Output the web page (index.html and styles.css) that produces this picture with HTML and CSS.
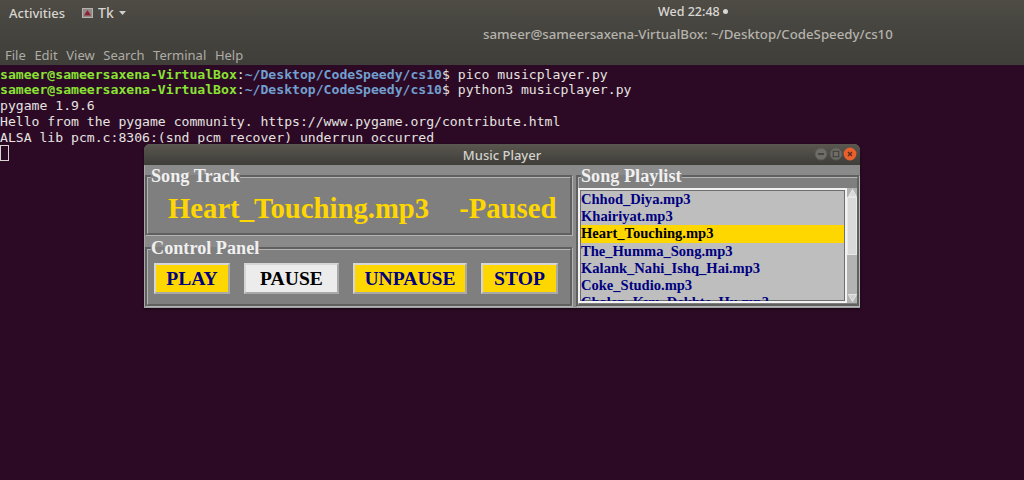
FILE: index.html
```html
<!DOCTYPE html>
<html lang="en">
<head>
<meta charset="utf-8">
<title>Music Player</title>
<link rel="stylesheet" href="styles.css">
</head>
<body>
<div class="desktop">
  <header class="chrome">
    <div class="panel">
      <span class="activities">Activities</span>
      <span class="app">
        <svg class="app-icon" width="11" height="10" viewBox="0 0 11 10"><rect x="0.5" y="0.5" width="10" height="9" fill="#8f8a88" stroke="#b5b2ae"/><path d="M5.5 2 L9 7.5 H2 Z" fill="#8e2230"/></svg>
        <span class="app-name">Tk</span>
        <svg class="caret" width="7" height="4" viewBox="0 0 7 4"><path d="M0 0 H7 L3.5 4 Z" fill="#d0cfca"/></svg>
      </span>
      <span class="clock">Wed 22:48<i class="dot"></i></span>
    </div>
    <div class="term-title">sameer@sameersaxena-VirtualBox: ~/Desktop/CodeSpeedy/cs10</div>
    <nav class="menu">
      <span>File</span><span>Edit</span><span>View</span><span>Search</span><span>Terminal</span><span>Help</span>
    </nav>
  </header>
  <main class="terminal">
    <div class="line"><b class="user">sameer@sameersaxena-VirtualBox</b>:<b class="path">~/Desktop/CodeSpeedy/cs10</b>$ pico musicplayer.py</div>
    <div class="line"><b class="user">sameer@sameersaxena-VirtualBox</b>:<b class="path">~/Desktop/CodeSpeedy/cs10</b>$ python3 musicplayer.py</div>
    <div class="line">pygame 1.9.6</div>
    <div class="line">Hello from the pygame community. https://www.pygame.org/contribute.html</div>
    <div class="line">ALSA lib pcm.c:8306:(snd_pcm_recover) underrun occurred</div>
    <div class="line"><span class="cursor"></span></div>
  </main>

  <section class="player">
    <div class="titlebar">
      <span class="title">Music Player</span>
      <span class="controls">
        <svg width="14" height="14" viewBox="0 0 14 14"><circle cx="7" cy="7" r="6" fill="#6f6d68" stroke="#5b5955"/><path d="M4 7 H10" stroke="#3b3a37" stroke-width="1.4"/></svg>
        <svg width="14" height="14" viewBox="0 0 14 14"><circle cx="7" cy="7" r="6" fill="#6f6d68" stroke="#5b5955"/><rect x="4.2" y="4.2" width="5.6" height="5.6" fill="none" stroke="#3b3a37"/></svg>
        <svg width="14" height="14" viewBox="0 0 14 14"><circle cx="7" cy="7" r="6.4" fill="#e9602c"/><path d="M5 5 L9 9 M9 5 L5 9" stroke="#5a2a18" stroke-width="1.3"/></svg>
      </span>
    </div>
    <div class="player-body">
      <div class="left-col">
        <fieldset class="frame track-frame">
          <legend>Song Track</legend>
          <div class="track"><span>Heart_Touching.mp3</span><span>-Paused</span></div>
        </fieldset>
        <fieldset class="frame panel-frame">
          <legend>Control Panel</legend>
          <div class="buttons">
            <button class="btn play">PLAY</button>
            <button class="btn pause">PAUSE</button>
            <button class="btn unpause">UNPAUSE</button>
            <button class="btn stop">STOP</button>
          </div>
        </fieldset>
      </div>
      <fieldset class="frame list-frame">
        <legend>Song Playlist</legend>
        <div class="list-wrap">
          <ul class="list">
            <li>Chhod_Diya.mp3</li>
            <li>Khairiyat.mp3</li>
            <li class="selected">Heart_Touching.mp3</li>
            <li>The_Humma_Song.mp3</li>
            <li>Kalank_Nahi_Ishq_Hai.mp3</li>
            <li>Coke_Studio.mp3</li>
            <li>Chalen_Kyu_Dekhte_Hu.mp3</li>
          </ul>
          <div class="scrollbar">
            <svg class="arrow" width="9" height="8" viewBox="0 0 9 8"><path d="M4.5 0.5 L8.5 7.5 H0.5 Z" fill="#d9d9d9" stroke="#efefef" stroke-width="0.8"/></svg>
            <div class="thumb"></div>
            <svg class="arrow down" width="9" height="8" viewBox="0 0 9 8"><path d="M4.5 7.5 L8.5 0.5 H0.5 Z" fill="#d0d0d0" stroke="#efefef" stroke-width="0.8"/></svg>
          </div>
        </div>
      </fieldset>
    </div>
  </section>
</div>
</body>
</html>
```
FILE: styles.css
```css
* { box-sizing: border-box; }
html, body { margin: 0; padding: 0; background: #2c0a25; }
.desktop {
  position: relative;
  width: 1024px;
  height: 480px;
  overflow: hidden;
  display: flex;
  flex-direction: column;
}
.chrome {
  height: 65px;
  flex: none;
  background: linear-gradient(#4f4c46 0, #47453f 26px, #3f3e39 65px);
  font-family: "Noto Sans", "DejaVu Sans", sans-serif;
  display: flex;
  flex-direction: column;
}
.panel {
  height: 25px;
  position: relative;
  display: flex;
  align-items: center;
  padding-left: 9px;
  font-size: 13px;
  font-weight: 500;
  color: #d6d5d0;
}
.activities { margin-right: 17px; }
.app { display: flex; align-items: center; gap: 5px; }
.app-name { font-size: 14px; }
.caret { margin-left: 0; }
.clock {
  position: absolute;
  left: 658px;
  top: 3px;
  display: flex;
  align-items: center;
  gap: 3px;
  font-size: 12.5px;
  color: #d8d7d2;
}
.dot { width: 5px; height: 5px; border-radius: 50%; background: #d8d7d2; }
.term-title {
  height: 18px;
  padding-left: 483px;
  font-size: 13.25px;
  line-height: 18px;
  font-weight: 500;
  color: #b5b3ad;
  white-space: nowrap;
}
.menu {
  display: flex;
  gap: 8.6px;
  padding: 3px 0 0 5px;
  font-size: 13px;
  line-height: 18px;
  color: #aeaca6;
}
.terminal {
  flex: 1;
  background: #2c0a25;
  font-family: "DejaVu Sans Mono", monospace;
  font-size: 13.12px;
  line-height: 15.75px;
  color: #e6e3e0;
  padding-top: 1.6px;
}
.line { height: 15.75px; white-space: pre; }
.user { color: #8ae234; font-weight: 700; }
.path { color: #729fcf; font-weight: 700; }
.cursor {
  display: inline-block;
  width: 9px;
  height: 16px;
  border: 1px solid #d8d4d2;
  vertical-align: top;
}
.player {
  position: absolute;
  left: 144px;
  top: 144px;
  width: 716px;
  height: 164px;
  background: #7f7f7f;
  border-radius: 6px 6px 0 0;
  box-shadow: 0 1px 3px rgba(0, 0, 0, 0.5);
  font-family: "Liberation Serif", serif;
  font-weight: 700;
  overflow: hidden;
}
.titlebar {
  height: 21px;
  background: linear-gradient(#59574f, #3e3d38);
  position: relative;
  display: flex;
  align-items: center;
  justify-content: center;
}
.title {
  font-family: "Noto Sans", sans-serif;
  font-size: 13px;
  font-weight: 500;
  color: #d3d2cd;
}
.controls {
  position: absolute;
  right: 3px;
  top: 3px;
  display: flex;
  gap: 0.5px;
}
.player-body {
  display: flex;
  height: 143px;
  padding: 2px 0 0 0;
  gap: 3px;
  background: #8a8a8a;
  border-left: 1px solid #a6a6a6;
  border-bottom: 1px solid #a0a0a0;
}
.left-col {
  width: 428px;
  flex: none;
  display: flex;
  flex-direction: column;
  gap: 3px;
}
.frame {
  margin: 0;
  padding: 0;
  min-width: 0;
  background: #7f7f7f;
  border: 3px groove #b4b4b4;
}
.frame legend {
  padding: 0;
  margin-left: 3px;
  font-size: 18.2px;
  line-height: 19px;
  color: #f0f0f0;
}
.track-frame { height: 69px; }
.panel-frame { height: 68px; }
.track {
  display: flex;
  gap: 30px;
  padding: 6px 0 0 20px;
  font-size: 28.7px;
  line-height: 32px;
  color: #ffd700;
}
.buttons {
  display: flex;
  gap: 14px;
  padding: 5px 0 0 6px;
}
.btn {
  height: 31px;
  padding: 0;
  font-family: "Liberation Serif", serif;
  font-size: 19.6px;
  font-weight: 700;
  color: #000080;
  background: #ffd700;
  border: 2px solid;
  border-color: #d6d6d6 #a9a9a9 #a9a9a9 #d6d6d6;
}
.play { width: 76px; }
.pause { width: 95px; color: #000; background: #ececec; }
.unpause { width: 114px; }
.stop { width: 77px; }
.list-frame { flex: 1; height: 140px; }
.list-frame legend { margin-left: 2px; }
.list-wrap { display: flex; height: 115px; margin: 2px 0 0 -1px; }
.list {
  width: 269px;
  height: 115px;
  flex: none;
  margin: 0;
  padding: 1px;
  list-style: none;
  background: #bebebe;
  border: 2px solid #f2f2f2;
  box-shadow: inset 0 0 0 1px #6e6e6e;
  overflow: hidden;
  font-size: 14.55px;
  line-height: 17.2px;
  color: #000080;
}
.list li { height: 17.2px; white-space: nowrap; }
.list .selected { background: #ffd700; color: #000; }
.scrollbar {
  flex: 1;
  background: #b3b3b3;
  display: flex;
  flex-direction: column;
  align-items: center;
  padding-top: 1px;
}
.arrow { flex: none; }
.arrow.down { margin-top: auto; margin-bottom: 1px; }
.thumb {
  width: 100%;
  height: 58px;
  background: #d9d9d9;
  border: 1px solid #e8e8e8;
  flex: none;
}
```
